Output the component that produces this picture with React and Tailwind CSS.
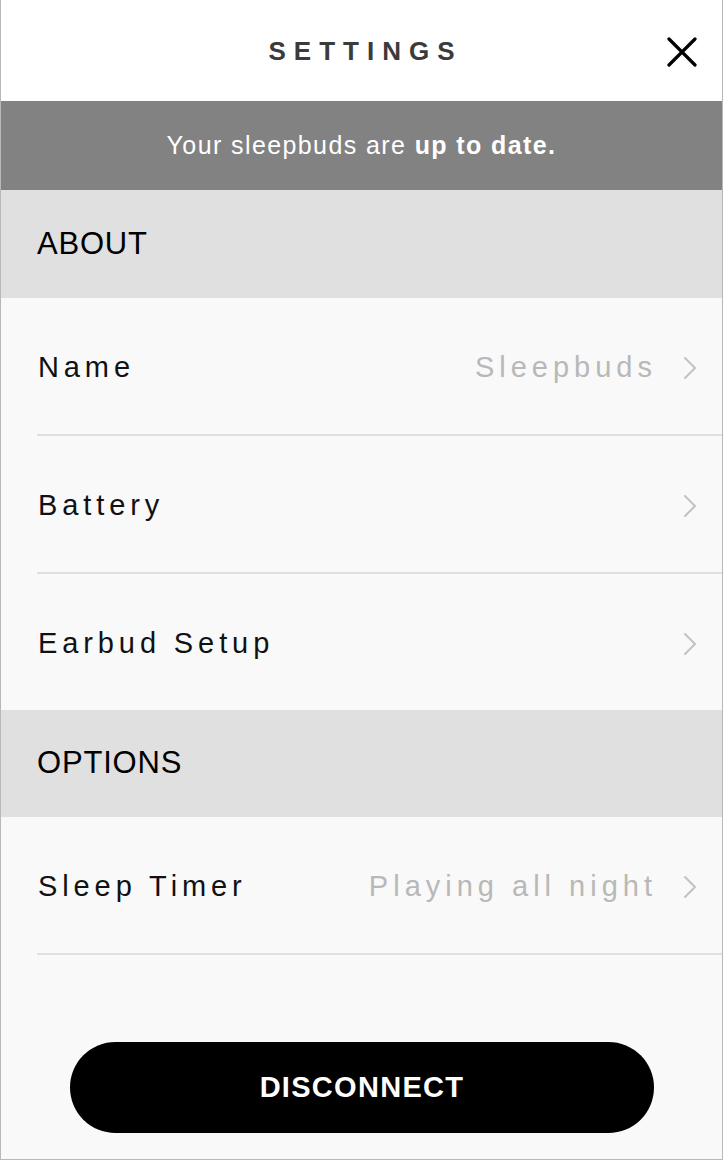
import React from "react";

const Chevron = () => (
  <svg width="14" height="24" viewBox="0 0 14 24" className="shrink-0">
    <polyline points="2,2 12,12 2,22" fill="none" stroke="#c2c2c2" strokeWidth="2" strokeLinecap="round" strokeLinejoin="round" />
  </svg>
);

const Row = ({ label, value, divider = true }) => (
  <div className="flex flex-col">
    <div className="flex h-[136px] items-center pl-[37px] pr-[25px] pt-[3px]">
      <span className="text-[29px] tracking-[4.9px] text-[#111]">{label}</span>
      <div className="flex-1" />
      {value && <span className="mr-[26px] text-[29px] tracking-[5px] text-[#b8b8b8]">{value}</span>}
      <Chevron />
    </div>
    {divider && <div className="ml-[36px] h-[2px] bg-[#e0e0e0]" />}
  </div>
);

const Section = ({ title, h }) => (
  <div className={`flex ${h} items-center bg-[#e0e0e0] pl-[36px]`}>
    <span className="text-[31px] font-medium tracking-[0.8px] text-black">{title}</span>
  </div>
);

export default function App() {
  return (
    <div
      className="flex h-[1160px] w-[723px] flex-col border-x border-b border-[#b8b8b8] bg-[#f9f9f9]"
      style={{ fontFamily: '"Liberation Sans", Arial, sans-serif' }}
    >
      <div className="relative flex h-[101px] items-center justify-center bg-white pt-[2px]">
        <span className="pl-[8px] text-[26px] font-bold tracking-[8px] text-[#3b3b3b]">SETTINGS</span>
        <svg className="absolute right-[25px] top-[37px]" width="30" height="30" viewBox="0 0 30 30">
          <path d="M2 2 L28 28 M28 2 L2 28" stroke="#000" strokeWidth="3.2" strokeLinecap="round" />
        </svg>
      </div>
      <div className="flex h-[89px] items-center justify-center bg-[#828282]">
        <span className="text-[25px] tracking-[1.4px] text-white">
          Your sleepbuds are <span className="font-bold">up to date.</span>
        </span>
      </div>
      <Section title="ABOUT" h="h-[108px]" />
      <Row label="Name" value="Sleepbuds" />
      <Row label="Battery" />
      <Row label="Earbud Setup" divider={false} />
      <Section title="OPTIONS" h="h-[107px]" />
      <Row label="Sleep Timer" value="Playing all night" />
      <div className="flex flex-1 items-end justify-center pb-[26px]">
        <button className="flex h-[91px] w-[584px] items-center justify-center rounded-full bg-black">
          <span className="pl-[1px] text-[29px] font-bold tracking-[1.3px] text-white">DISCONNECT</span>
        </button>
      </div>
    </div>
  );
}
